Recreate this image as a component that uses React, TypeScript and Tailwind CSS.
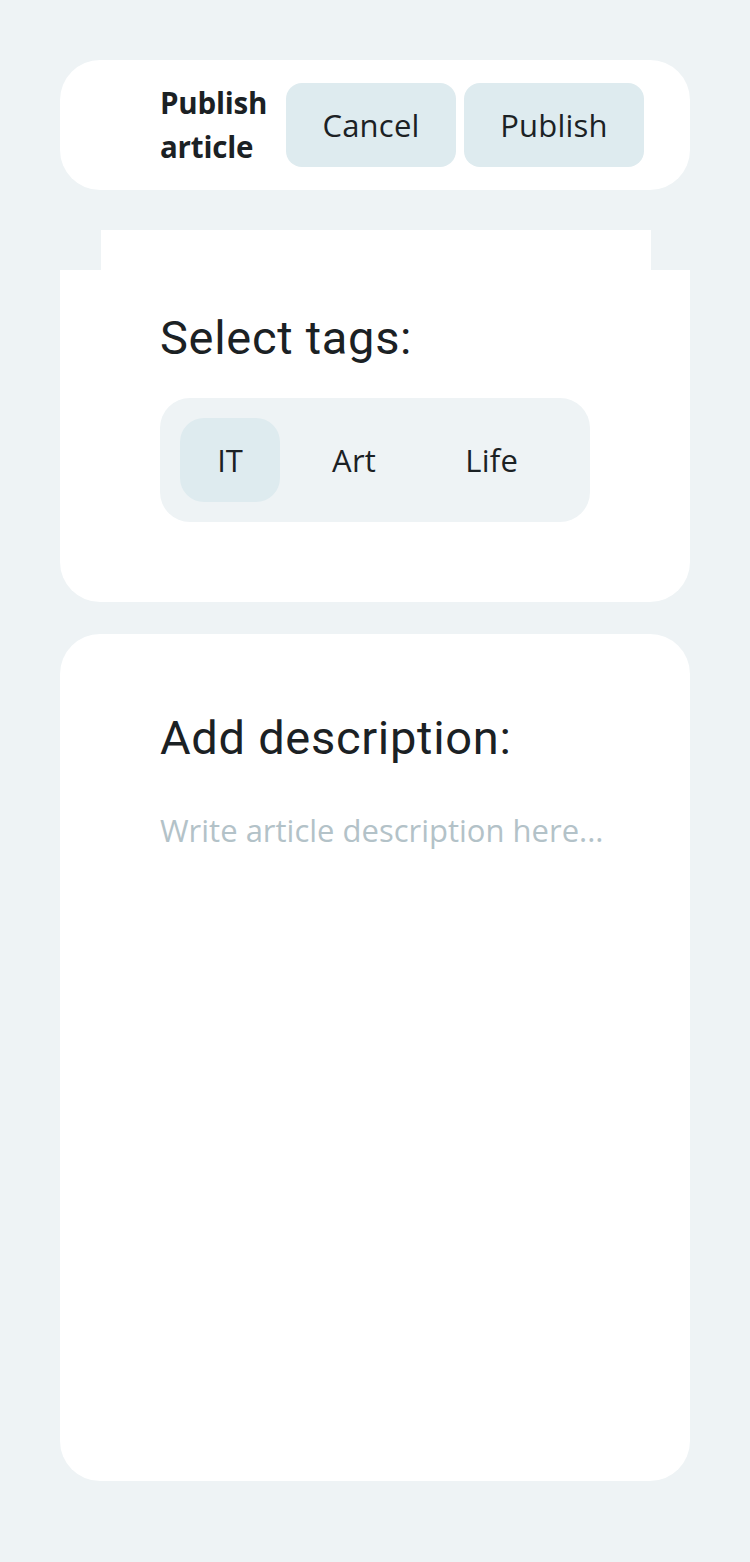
export default function App() {
  return (
    <div className="min-h-[1562px] w-[750px] bg-[#eef3f5] px-[60px] pt-[60px] text-[#1b2124] font-['Open_Sans',sans-serif]">
      <div className="flex h-[130px] items-center rounded-[40px] bg-white pl-[100px] pr-[46px]">
        <div className="w-[126px] text-[29.5px] font-bold leading-[44px] tracking-[-0.2px]">
          Publish
          <br />
          article
        </div>
        <div className="flex gap-[8px]">
          <button className="h-[84px] w-[170px] rounded-[16px] bg-[#deebef] text-[31px] tracking-[0.2px]">
            Cancel
          </button>
          <button className="h-[84px] w-[180px] rounded-[16px] bg-[#deebef] text-[31px] tracking-[0.2px]">
            Publish
          </button>
        </div>
      </div>
      <div className="mt-[40px] ml-[41px] mr-[39px] h-[40px] bg-white" />
      <div className="rounded-b-[40px] bg-white pl-[100px] pt-[40px] pb-[80px]">
        <h2 className="text-[47px] leading-[56px] tracking-[0.7px] font-['Roboto',sans-serif]">Select tags:</h2>
        <div className="mt-[32px] flex w-[430px] gap-[15px] rounded-[30px] bg-[#eef3f5] p-[20px]">
          <div className="flex h-[84px] w-[100px] items-center justify-center rounded-[24px] bg-[#deebef] text-[31px]">
            IT
          </div>
          <div className="flex h-[84px] items-center justify-center rounded-[24px] px-[37px] text-[31px] tracking-[0.3px]">
            Art
          </div>
          <div className="flex h-[84px] items-center justify-center rounded-[24px] px-[37px] text-[31px] tracking-[0.3px]">
            Life
          </div>
        </div>
      </div>
      <div className="mt-[32px] h-[847px] rounded-[40px] bg-white pl-[100px] pt-[76px]">
        <h2 className="text-[47px] leading-[56px] tracking-[0.7px] font-['Roboto',sans-serif]">Add description:</h2>
        <div className="mt-[44px] text-[31px] leading-[40px] text-[#b3c2c8]">
          Write article description here...
        </div>
      </div>
    </div>
  );
}
